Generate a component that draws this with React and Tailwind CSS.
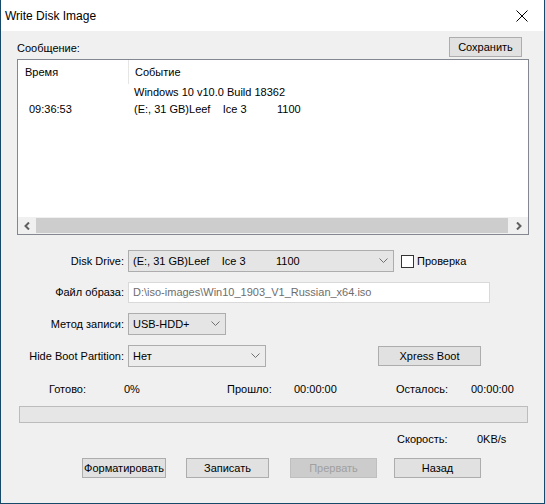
import React from "react";

const Chevron = () => (
  <svg width="9" height="6" viewBox="0 0 9 6" className="shrink-0">
    <path d="M0.5 0.5 L4.5 4.5 L8.5 0.5" fill="none" stroke="#707070" strokeWidth="1" />
  </svg>
);

const Combo = ({ w, text, bg = "bg-[#e5e5e5]" }) => (
  <div className={`flex items-center justify-between h-[22px] border border-[#adadad] ${bg} pl-[4px] pr-[5px] ${w}`}>
    <span className="whitespace-pre">{text}</span>
    <Chevron />
  </div>
);

const Btn = ({ children, w, disabled }) => (
  <div
    className={`flex items-center justify-center h-[20px] border ${w} ${
      disabled ? "border-[#bfbfbf] bg-[#cccccc] text-[#a0a0a0]" : "border-[#adadad] bg-[#e1e1e1] text-black"
    }`}
  >
    {children}
  </div>
);

export default function App() {
  return (
    <div
      className="w-[545px] h-[504px] bg-[#f0f0f0] border-l border-r border-b border-[#17496b] flex flex-col text-[11px] text-black leading-none"
      style={{ fontFamily: '"Liberation Sans", Arial, sans-serif' }}
    >
      {/* Title bar */}
      <div className="h-[31px] bg-white flex items-center justify-between pl-[4px] pr-[16px] shrink-0">
        <span className="text-[12px]">Write Disk Image</span>
        <svg width="12" height="12" viewBox="0 0 12 12">
          <path d="M0.5 0.5 L11.5 11.5 M11.5 0.5 L0.5 11.5" stroke="#000" strokeWidth="1" />
        </svg>
      </div>

      {/* Message row */}
      <div className="flex items-end justify-between pl-[16px] pr-[22px] mt-[6px] h-[20px]">
        <span className="pb-[3px]">Сообщение:</span>
        <Btn w="w-[73px]">Сохранить</Btn>
      </div>

      {/* List */}
      <div className="ml-[16px] mt-[2px] w-[512px] h-[176px] border border-[#828790] bg-white flex flex-col">
        <div className="h-[24px] flex items-center relative">
          <span className="pl-[7px] w-[110px]">Время</span>
          <div className="w-px h-[24px] bg-[#e5e5e5] mt-[0px]" />
          <span className="pl-[6px]">Событие</span>
        </div>
        <div className="h-[17px] flex items-center pl-[116px]">Windows 10 v10.0 Build 18362</div>
        <div className="h-[17px] flex items-center">
          <span className="pl-[11px] w-[116px]">09:36:53</span>
          <span className="whitespace-pre">(E:, 31 GB)Leef    Ice 3          1100</span>
        </div>
        <div className="flex-1" />
        <div className="h-[17px] flex items-center bg-[#f0f0f0]">
          <div className="w-[18px] flex justify-center">
            <svg width="7" height="8" viewBox="0 0 7 8">
              <path d="M5 0.5 L1.5 4 L5 7.5" fill="none" stroke="#606060" strokeWidth="2" />
            </svg>
          </div>
          <div className="flex-1 h-[15px] bg-[#cdcdcd]" />
          <div className="w-[20px] flex justify-center">
            <svg width="7" height="8" viewBox="0 0 7 8">
              <path d="M2 0.5 L5.5 4 L2 7.5" fill="none" stroke="#606060" strokeWidth="2" />
            </svg>
          </div>
        </div>
      </div>

      {/* Form rows */}
      <div className="flex items-center mt-[15px] h-[22px]">
        <span className="w-[123px] text-right">Disk Drive:</span>
        <div className="ml-[4px]">
          <Combo w="w-[266px]" text={"(E:, 31 GB)Leef    Ice 3          1100"} />
        </div>
        <div className="ml-[7px] w-[13px] h-[13px] border border-[#333] bg-white" />
        <span className="ml-[3px]">Проверка</span>
      </div>

      <div className="flex items-center mt-[10px] h-[21px]">
        <span className="w-[123px] text-right">Файл образа:</span>
        <div className="ml-[4px] w-[362px] h-[21px] border border-[#d9d9d9] bg-white flex items-center pl-[4px] text-[#6d6d6d]">
          D:\iso-images\Win10_1903_V1_Russian_x64.iso
        </div>
      </div>

      <div className="flex items-center mt-[10px] h-[22px]">
        <span className="w-[123px] text-right">Метод записи:</span>
        <div className="ml-[4px]">
          <Combo w="w-[98px]" text="USB-HDD+" />
        </div>
      </div>

      <div className="flex items-center mt-[10px] h-[22px]">
        <span className="w-[123px] text-right">Hide Boot Partition:</span>
        <div className="ml-[4px]">
          <Combo w="w-[138px]" text="Нет" bg="bg-[#ececec]" />
        </div>
        <div className="ml-[112px]">
          <Btn w="w-[103px]">Xpress Boot</Btn>
        </div>
      </div>

      {/* Status */}
      <div className="flex items-center mt-[15px] h-[14px] relative">
        <span className="ml-[48px] w-[75px]">Готово:</span>
        <span className="w-[103px]">0%</span>
        <span className="w-[67px]">Прошло:</span>
        <span className="w-[102px]">00:00:00</span>
        <span className="w-[75px]">Осталось:</span>
        <span>00:00:00</span>
      </div>

      <div className="ml-[18px] mt-[10px] w-[509px] h-[17px] border border-[#bcbcbc] bg-[#e6e6e6]" />

      <div className="flex items-center mt-[9px] h-[14px]">
        <span className="ml-[396px] w-[80px]">Скорость:</span>
        <span>0KB/s</span>
      </div>

      <div className="flex items-center mt-[12px]">
        <div className="ml-[81px]">
          <Btn w="w-[84px]">Форматировать</Btn>
        </div>
        <div className="ml-[20px]">
          <Btn w="w-[83px]">Записать</Btn>
        </div>
        <div className="ml-[21px]">
          <Btn w="w-[87px]" disabled>Прервать</Btn>
        </div>
        <div className="ml-[17px]">
          <Btn w="w-[87px]">Назад</Btn>
        </div>
      </div>
    </div>
  );
}
